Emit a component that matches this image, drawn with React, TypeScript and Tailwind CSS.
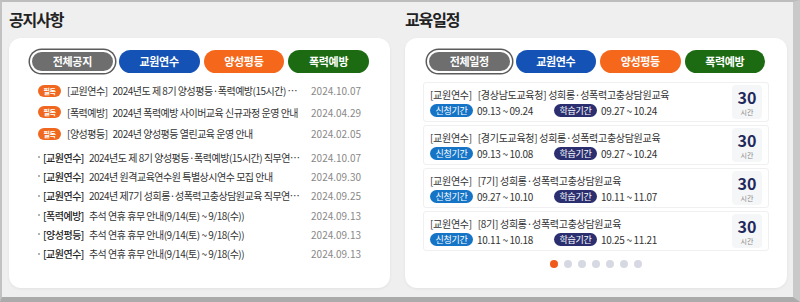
import React from "react";

const tabs = [
  { label: "교원연수", cls: "bg-[#1552b5]" },
  { label: "양성평등", cls: "bg-[#f5681c]" },
  { label: "폭력예방", cls: "bg-[#1c6b12]" },
];

const hotNotices = [
  { cat: "[교원연수]", title: "2024년도 제 8기 양성평등·폭력예방(15시간) …", date: "2024.10.07" },
  { cat: "[폭력예방]", title: "2024년 폭력예방 사이버교육 신규과정 운영 안내", date: "2024.04.29" },
  { cat: "[양성평등]", title: "2024년 양성평등 열린교육 운영 안내", date: "2024.02.05" },
];

const notices = [
  { cat: "[교원연수]", title: "2024년도 제 8기 양성평등·폭력예방(15시간) 직무연…", date: "2024.10.07" },
  { cat: "[교원연수]", title: "2024년 원격교육연수원 특별상시연수 모집 안내", date: "2024.09.30" },
  { cat: "[교원연수]", title: "2024년 제7기 성희롱·성폭력고충상담원교육 직무연…", date: "2024.09.25" },
  { cat: "[폭력예방]", title: "추석 연휴 휴무 안내(9/14(토) ~ 9/18(수))", date: "2024.09.13" },
  { cat: "[양성평등]", title: "추석 연휴 휴무 안내(9/14(토) ~ 9/18(수))", date: "2024.09.13" },
  { cat: "[교원연수]", title: "추석 연휴 휴무 안내(9/14(토) ~ 9/18(수))", date: "2024.09.13" },
];

const schedules = [
  { title: "[경상남도교육청] 성희롱·성폭력고충상담원교육", apply: "09.13 ~ 09.24", study: "09.27 ~ 10.24" },
  { title: "[경기도교육청] 성희롱·성폭력고충상담원교육", apply: "09.13 ~ 10.08", study: "09.27 ~ 10.24" },
  { title: "[7기] 성희롱·성폭력고충상담원교육", apply: "09.27 ~ 10.10", study: "10.11 ~ 11.07" },
  { title: "[8기] 성희롱·성폭력고충상담원교육", apply: "10.11 ~ 10.18", study: "10.25 ~ 11.21" },
];

function Tabs({ first }: { first: string }) {
  return (
    <div className="flex gap-[4px]">
      <div className="flex h-[23px] flex-1 items-center justify-center rounded-full border-2 border-white bg-[#6e6e6e] text-[11px] font-bold tracking-[-0.03em] text-white shadow-[0_0_0_1.5px_#5b5b5b]">
        {first}
      </div>
      {tabs.map((t) => (
        <div
          key={t.label}
          className={`flex h-[23px] flex-1 items-center justify-center rounded-full text-[11px] font-bold tracking-[-0.03em] text-white ${t.cls}`}
        >
          {t.label}
        </div>
      ))}
    </div>
  );
}

export default function App() {
  return (
    <div className="flex h-[302px] w-[800px] gap-[15px] border-t-2 border-r-[7px] border-b-[5px] border-l-2 border-t-[#bdbdbd] border-r-[#c9c9c9] border-b-[#ababab] border-l-[#c2c2c2] bg-[#efefef] pr-[6px] pb-[9px] pl-[7px] font-['Noto_Sans_CJK_KR',sans-serif] text-[#333]">
      {/* 공지사항 */}
      <section className="flex w-[381px] flex-col">
        <h2 className="mb-[7px] pt-[5px] text-[16px] leading-[24px] font-bold tracking-[-0.07em] text-[#222]">공지사항</h2>
        <div className="flex-1 rounded-[12px] bg-white px-[21px] pt-[12px] shadow-[0_1px_3px_rgba(0,0,0,0.06)]">
          <Tabs first="전체공지" />
          <div className="mt-[7px] px-[8px] text-[10px] tracking-[-0.05em]">
            {hotNotices.map((n, i) => (
              <div key={i} className="flex h-[21.5px] items-center">
                <span className="mr-[6px] flex h-[12px] w-[23px] shrink-0 items-center justify-center rounded-full bg-[#f06820] text-[7px] font-bold text-white">
                  필독
                </span>
                <span className="mr-[5px] shrink-0 text-[#333]">{n.cat}</span>
                <span className="min-w-0 flex-1 truncate text-[#333]">{n.title}</span>
                <span className="ml-2 shrink-0 tracking-normal text-[#888]">{n.date}</span>
              </div>
            ))}
            <div className="mt-[3px]">
              {notices.map((n, i) => (
                <div key={i} className="flex h-[19.3px] items-center">
                  <span className="mr-[3px] h-[2px] w-[2px] shrink-0 rounded-full bg-[#999]" />
                  <span className="mr-[5px] shrink-0 font-medium text-[#222]">{n.cat}</span>
                  <span className="min-w-0 flex-1 truncate text-[#333]">{n.title}</span>
                  <span className="ml-2 shrink-0 tracking-normal text-[#888]">{n.date}</span>
                </div>
              ))}
            </div>
          </div>
        </div>
      </section>

      {/* 교육일정 */}
      <section className="flex w-[382px] flex-col">
        <h2 className="mb-[7px] pt-[5px] text-[16px] leading-[24px] font-bold tracking-[-0.07em] text-[#222]">교육일정</h2>
        <div className="flex flex-1 flex-col rounded-[12px] bg-white px-[22px] pt-[12px] shadow-[0_1px_3px_rgba(0,0,0,0.06)]">
          <Tabs first="전체일정" />
          <div className="-mx-[4px] mt-[9px] flex flex-col gap-[3px]">
            {schedules.map((s, i) => (
              <div key={i} className="flex h-[40px] items-center rounded-[3px] border border-[#f0f0f2] pr-[6px] pl-[6px]">
                <div className="flex flex-1 flex-col gap-[3px] text-[10px] tracking-[-0.03em]">
                  <div className="leading-[13px] text-[#333]">
                    <span className="mr-[6px]">[교원연수]</span>
                    {s.title}
                  </div>
                  <div className="flex items-center leading-[13px]">
                    <span className="flex h-[13px] w-[43px] items-center justify-center rounded-full bg-[#1574c6] text-[9px] text-white">
                      신청기간
                    </span>
                    <span className="ml-[4px] w-[77px] text-[#333]">{s.apply}</span>
                    <span className="flex h-[13px] w-[43px] items-center justify-center rounded-full bg-[#2b2f70] text-[9px] text-white">
                      학습기간
                    </span>
                    <span className="ml-[4px] text-[#333]">{s.study}</span>
                  </div>
                </div>
                <div className="flex h-[34px] w-[30px] flex-col items-center justify-center gap-[3px] rounded-[4px] bg-[#f5f6f8]">
                  <span className="text-[16px] leading-[16px] font-bold text-[#1f2a5c]">30</span>
                  <span className="text-[7px] leading-[8px] text-[#888]">시간</span>
                </div>
              </div>
            ))}
          </div>
          <div className="mt-[9px] flex justify-center gap-[6px]">
            <span className="h-[8px] w-[8px] rounded-full bg-[#f05a1a]" />
            {[0, 1, 2, 3, 4, 5].map((d) => (
              <span key={d} className="h-[8px] w-[8px] rounded-full bg-[#d6d9e2]" />
            ))}
          </div>
        </div>
      </section>
    </div>
  );
}
